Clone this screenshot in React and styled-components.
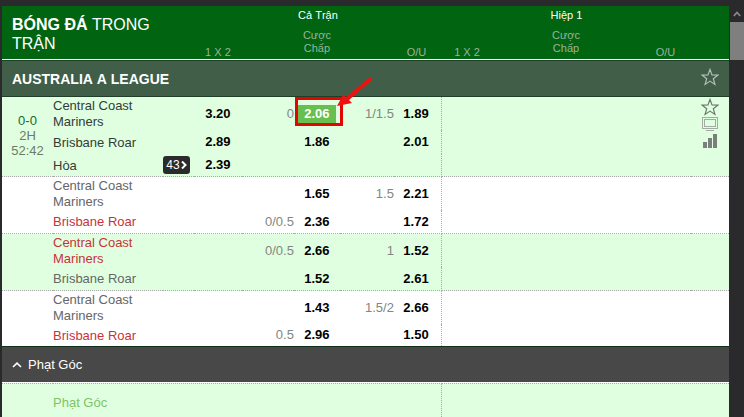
import styled, { createGlobalStyle, css } from "styled-components";

const matches = [
  {
    id: 1,
    main: true,
    score: "0-0",
    half: "2H",
    time: "52:42",
    rows: [
      { name: "Central Coast Mariners", win: "3.20", hdp: "0", hdpOdds: "2.06", picked: true, line: "1/1.5", lineOdds: "1.89" },
      { name: "Brisbane Roar", win: "2.89", hdpOdds: "1.86", lineOdds: "2.01" },
      { name: "Hòa", win: "2.39", more: 43 },
    ],
  },
  {
    id: 2,
    rows: [
      { name: "Central Coast Mariners", hdpOdds: "1.65", line: "1.5", lineOdds: "2.21" },
      { name: "Brisbane Roar", fav: true, hdp: "0/0.5", hdpOdds: "2.36", lineOdds: "1.72" },
    ],
  },
  {
    id: 3,
    tinted: true,
    rows: [
      { name: "Central Coast Mariners", fav: true, hdp: "0/0.5", hdpOdds: "2.66", line: "1", lineOdds: "1.52" },
      { name: "Brisbane Roar", hdpOdds: "1.52", lineOdds: "2.61" },
    ],
  },
  {
    id: 4,
    last: true,
    rows: [
      { name: "Central Coast Mariners", hdpOdds: "1.43", line: "1.5/2", lineOdds: "2.66" },
      { name: "Brisbane Roar", fav: true, hdp: "0.5", hdpOdds: "2.96", lineOdds: "1.50" },
    ],
  },
];

const StarIcon = ({ color }) => (
  <svg width="18" height="18" viewBox="0 0 18 18" fill="none" stroke={color} strokeWidth="1.2" strokeLinejoin="miter">
    <path d="M9 1.4 L11 6.9 L16.8 7.1 L12.3 10.7 L13.9 16.4 L9 13.1 L4.1 16.4 L5.7 10.7 L1.2 7.1 L7 6.9 Z" />
  </svg>
);

const TvIcon = () => (
  <svg width="18" height="16" viewBox="0 0 18 16" fill="none" stroke="#a3aca3">
    <rect x="1.5" y="0.5" width="15" height="11" />
    <rect x="3.5" y="2.5" width="11" height="7" />
    <path d="M5 13.5 H13" />
  </svg>
);

const StatsIcon = () => (
  <svg width="18" height="16" viewBox="0 0 18 16" fill="#7b7f7b">
    <rect x="2" y="8" width="4" height="6" />
    <rect x="7" y="4" width="4" height="10" />
    <rect x="12" y="0" width="4" height="14" />
  </svg>
);

const Odds = ({ value, picked }) => {
  if (!value) return null;
  if (!picked) return <OddsButton>{value}</OddsButton>;
  return (
    <Picked>
      <OddsButton $picked>{value}</OddsButton>
      <Frame />
      <Arrow width="42" height="34" viewBox="0 0 42 34" fill="#f01010">
        <path d="M3 31 L9 20 L12 22 L35 3 L37 3 L38 5 L15 25 L18 28 Z" />
      </Arrow>
    </Picked>
  );
};

const Match = ({ match }) => (
  <MatchBody $tinted={match.main || match.tinted} $last={match.last}>
    {match.rows.map((row, i) => (
      <Row key={row.name}>
        {i === 0 && (
          <TimeCell rowSpan={match.rows.length}>
            {match.main && (
              <>
                <Score>{match.score}</Score>
                <div>{match.half}</div>
                <div>{match.time}</div>
              </>
            )}
          </TimeCell>
        )}
        <NameCell $fav={row.fav} $main={match.main}>
          {row.name}
        </NameCell>
        <td>
          {row.more && (
            <MoreButton>
              {row.more}
              <svg width="6" height="8" viewBox="0 0 6 8" fill="none" stroke="#fff" strokeWidth="2">
                <path d="M1 0.5 L4.5 4 L1 7.5" />
              </svg>
            </MoreButton>
          )}
        </td>
        <OddsCell><Odds value={row.win} /></OddsCell>
        <LineCell>{row.hdp}</LineCell>
        <OddsCell><Odds value={row.hdpOdds} picked={row.picked} /></OddsCell>
        <LineCell>{row.line}</LineCell>
        <OddsCell $divider><Odds value={row.lineOdds} /></OddsCell>
        {i === 0 && (
          <>
            <td colSpan={5} rowSpan={match.rows.length} />
            <ToolsCell rowSpan={match.rows.length}>
              {match.main && (
                <Tools>
                  <IconButton aria-label="Central Coast Mariners - Brisbane Roar"><StarIcon color="#6f756f" /></IconButton>
                  <IconButton aria-label="TV"><TvIcon /></IconButton>
                  <IconButton aria-label="Stats"><StatsIcon /></IconButton>
                </Tools>
              )}
            </ToolsCell>
          </>
        )}
      </Row>
    ))}
  </MatchBody>
);

const App = () => {
  return (
    <Page>
      <GlobalStyle />
      <Content>
        <Table>
          <colgroup>
            <Col $w={51} />
            <col />
            <Col $w={31} />
            <Col $w={48} />
            <Col $w={52} />
            <Col $w={46} />
            <Col $w={54} />
            <Col $w={48} />
            <Col $w={50} />
            <Col $w={51} />
            <Col $w={46} />
            <Col $w={54} />
            <Col $w={48} />
            <Col $w={38} />
          </colgroup>
          <Head>
            <tr>
              <Title colSpan={3} rowSpan={2}>
                <b>BÓNG ĐÁ</b> TRONG TRẬN
              </Title>
              <Period colSpan={5}>Cả Trận</Period>
              <Period colSpan={5}>Hiệp 1</Period>
              <td rowSpan={2} />
            </tr>
            <tr>
              <Market>1 X 2</Market>
              <td />
              <Market $wrap>Cược Chấp</Market>
              <td />
              <Market $edge>O/U</Market>
              <Market>1 X 2</Market>
              <td />
              <Market $wrap>Cược Chấp</Market>
              <td />
              <Market $edge>O/U</Market>
            </tr>
          </Head>
          <tbody>
            <League>
              <th colSpan={13}>AUSTRALIA A LEAGUE</th>
              <td>
                <IconButton aria-label="AUSTRALIA A LEAGUE"><StarIcon color="#b4bfb6" /></IconButton>
              </td>
            </League>
          </tbody>
          {matches.map((match) => (
            <Match key={match.id} match={match} />
          ))}
          <tbody>
            <tr>
              <td colSpan={14}>
                <SectionButton>
                  <svg width="10" height="6" viewBox="0 0 10 6" fill="none" stroke="#fff" strokeWidth="1.6">
                    <path d="M1 5 L5 1.2 L9 5" />
                  </svg>
                  Phạt Góc
                </SectionButton>
              </td>
            </tr>
            <Corner>
              <td />
              <CornerName colSpan={7}>Phạt Góc</CornerName>
              <td colSpan={6} />
            </Corner>
          </tbody>
        </Table>
      </Content>
      <Scrollbar>
        <svg width="8" height="6" viewBox="0 0 8 6" fill="none" stroke="#8c8c8c" strokeWidth="1.6">
          <path d="M0.8 5 L4 1.5 L7.2 5" />
        </svg>
        <Thumb />
      </Scrollbar>
    </Page>
  );
};

const GlobalStyle = createGlobalStyle`
  * {
    box-sizing: border-box;
  }
  body {
    margin: 0;
    background: #2a2a2c;
    font-family: "Liberation Sans", Arial, sans-serif;
    font-size: 13px;
    line-height: 16px;
    font-kerning: none;
  }
  button {
    font: inherit;
    border: 0;
    padding: 0;
    background: none;
    cursor: pointer;
  }
  svg {
    display: block;
  }
`;

const Page = styled.div`
  display: flex;
  height: 100vh;
  padding: 6px 0 0 2px;
  overflow: hidden;
`;

const Content = styled.main`
  flex: 1;
  min-width: 0;
`;

const Table = styled.table`
  width: 100%;
  table-layout: fixed;
  border-collapse: separate;
  border-spacing: 0;

  td,
  th {
    padding: 0;
  }
`;

const Col = styled.col`
  width: ${({ $w }) => $w}px;
`;

const Head = styled.thead`
  background: #006410;
  color: #fff;

  tr:first-child {
    height: 20px;
  }
  tr:last-child {
    height: 34px;
  }
  tr:last-child > *,
  [rowspan] {
    border-bottom: 1px solid #fff;
  }
`;

const Title = styled.th`
  && {
    padding: 9px 10px 0;
  }
  vertical-align: top;
  text-align: left;
  font-size: 16px;
  line-height: 19px;
  font-weight: normal;
`;

const Period = styled.th`
  && {
    padding-bottom: 2px;
  }
  font-size: 11px;
  font-weight: normal;
`;

const Market = styled.th`
  && {
    padding-bottom: ${({ $wrap }) => ($wrap ? 4 : 0)}px;
    padding-right: ${({ $edge }) => ($edge ? 3 : 0)}px;
  }
  vertical-align: bottom;
  font-size: 11px;
  line-height: 13px;
  font-weight: normal;
  color: #9bb39c;
`;

const League = styled.tr`
  height: 37px;
  background: #405e48;

  > * {
    border-top: 1px solid #203f28;
    border-bottom: 1px solid #203f28;
  }
  th {
    padding-left: 10px;
    text-align: left;
    font-size: 14px;
    color: #fff;
  }
  td {
    padding-bottom: 3px;
  }
`;

const MatchBody = styled.tbody`
  background: ${({ $tinted }) => ($tinted ? "#e0ffe0" : "#fff")};

  ${({ $last }) =>
    !$last &&
    css`
      tr:last-child > *,
      [rowspan] {
        border-bottom: 1px dotted #aaa;
      }
    `}
`;

const Row = styled.tr`
  height: 24px;

  &:first-child {
    height: 33px;
  }
  &:nth-child(3) {
    height: 23px;
  }
  ${MatchBody}:nth-last-child(2) > &:last-child {
    height: 22px;
  }
`;

const TimeCell = styled.td`
  && {
    padding-bottom: 3px;
  }
  text-align: center;
  line-height: 15px;
  color: #6d7a6d;
`;

const Score = styled.div`
  color: #17692b;
`;

const NameCell = styled.td`
  && {
    padding-top: 1px;
  }
  color: ${({ $fav, $main }) => ($fav ? "#c8333a" : $main ? "#333c36" : "#666")};
`;

const OddsCell = styled.td`
  text-align: center;
  ${({ $divider }) =>
    $divider &&
    css`
      && {
        padding-right: 3px;
      }
      border-right: 1px dotted #aaa;
    `}
`;

const LineCell = styled.td`
  text-align: right;
  color: #808780;
`;

const OddsButton = styled.button`
  && {
    font-weight: bold;
  }
  color: #000;
  ${({ $picked }) =>
    $picked &&
    css`
      && {
        width: 38px;
        height: 18px;
        background: #67bf4f;
        color: #fff;
      }
    `}
`;

const Picked = styled.span`
  position: relative;
  display: inline-block;
`;

/* red marker drawn over the changed price */
const Frame = styled.span`
  position: absolute;
  inset: -8px -7px -3px -3px;
  border: 3px solid #e10600;
  pointer-events: none;
`;

const Arrow = styled.svg`
  position: absolute;
  left: 36px;
  top: -30px;
  pointer-events: none;
`;

const MoreButton = styled.button`
  display: flex;
  align-items: center;
  justify-content: center;
  gap: 1px;
  width: 27px;
  height: 18px;
  border-radius: 3px;
  && {
    background: #2b2b2b;
    font-size: 12px;
  }
  color: #fff;
`;

const ToolsCell = styled.td`
  vertical-align: top;
`;

const Tools = styled.div`
  display: flex;
  flex-direction: column;
  gap: 1px;
  padding-top: 1px;
`;

const IconButton = styled.button`
  display: flex;
  margin: 0 auto;
`;

const SectionButton = styled.button`
  display: flex;
  align-items: center;
  gap: 6px;
  width: 100%;
  height: 37px;
  && {
    padding: 1px 10px 0;
    background: #484848;
    border-top: 1px solid #10301a;
    border-bottom: 1px solid #fff;
  }
  color: #fff;
`;

const Corner = styled.tr`
  height: 38px;
  background: #e0ffe0;

  > * {
    border-top: 1px dotted #aaa;
  }
`;

const CornerName = styled.td`
  border-right: 1px dotted #aaa;
  color: #7cc46a;
`;

const Scrollbar = styled.div`
  display: flex;
  flex-direction: column;
  align-items: center;
  gap: 5px;
  width: 15px;
  padding: 5px 0 0 1px;
`;

const Thumb = styled.div`
  width: 100%;
  height: 38px;
  background: #7f7f7f;
`;

export default App;
